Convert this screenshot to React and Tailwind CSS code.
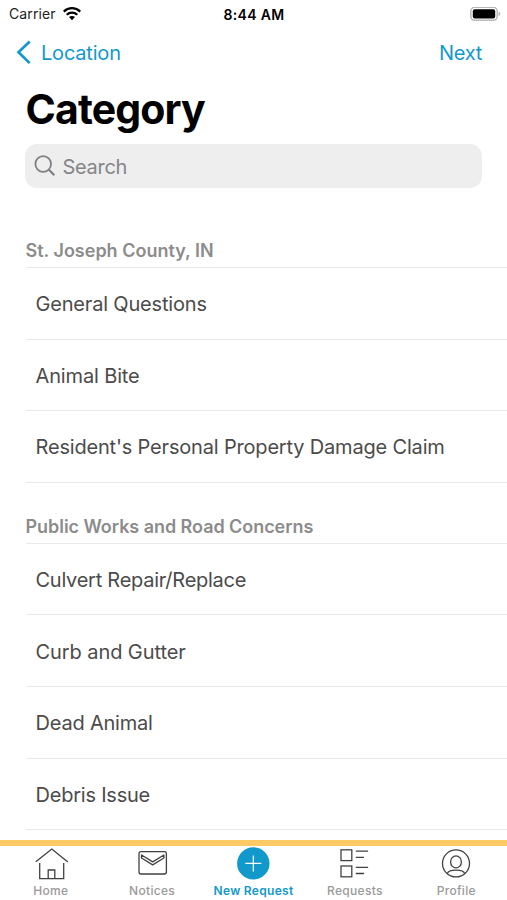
import React from "react";

const sections = [
  {
    title: "St. Joseph County, IN",
    titleClass: "tracking-[0px]",
    headClass: "h-[80px] pb-[4px]",
    rows: [
      ["General Questions", "tracking-[-0.18px]"],
      ["Animal Bite", "tracking-[-0.14px]"],
      ["Resident's Personal Property Damage Claim", "tracking-[-0.18px]"],
    ],
  },
  {
    title: "Public Works and Road Concerns",
    titleClass: "tracking-[-0.05px]",
    headClass: "h-[61px] pb-[4px]",
    rows: [
      ["Culvert Repair/Replace", "tracking-[-0.26px]"],
      ["Curb and Gutter", "tracking-[-0.08px]"],
      ["Dead Animal", "tracking-[-0.2px]"],
      ["Debris Issue", "tracking-[-0.22px]"],
    ],
  },
];

const line = { fill: "none", stroke: "#424242", strokeWidth: 1.3 };

function WifiIcon() {
  return (
    <svg className="ml-[7px] h-[14px] w-[18px]" viewBox="0 0 18 14" fill="none" stroke="#000" strokeWidth="2.2">
      <path d="M.8 4.6C5.4 0 12.6 0 17.2 4.6" />
      <path d="M3.7 7.8c3-2.8 7.6-2.8 10.6 0" />
      <path d="M6 10.1c1.7-1.5 4.3-1.5 6 0L9 13.2z" fill="#000" stroke="none" />
    </svg>
  );
}

function BatteryIcon() {
  return (
    <svg className="h-[15px] w-[31px]" viewBox="0 0 31 15">
      <rect x=".8" y=".3" width="26.4" height="13" rx="4" fill="#fff" stroke="#b8b8b8" strokeWidth="1.5" />
      <rect x="2.8" y="2.2" width="22.4" height="9.2" rx="2" fill="#000" />
      <path d="M28.6 4.7c2.3.6 2.3 3.6 0 4.3z" fill="#b4b4b4" />
    </svg>
  );
}

function HomeIcon() {
  return (
    <svg className="h-[34px] w-[34px]" viewBox="0 0 34 34" {...line}>
      <path d="M1.8 15.8 17.8 3l16 13M5.7 17v15.6h24V17M14.2 32.6V24h6.6v8.6" />
    </svg>
  );
}

function MailIcon() {
  return (
    <svg className="h-[34px] w-[34px]" viewBox="0 0 34 34" {...line}>
      <rect x="4" y="5.7" width="27.4" height="22.3" rx="2" />
      <path d="M6.5 9 17.7 15.9 28.9 9v3L17.7 18.9 6.5 12z" strokeLinejoin="round" />
    </svg>
  );
}

function PlusIcon() {
  return (
    <svg className="h-[34px] w-[34px]" viewBox="0 0 34 34">
      <circle cx="17.3" cy="17.4" r="16.2" fill="#1299cc" />
      <path d="M17.3 9.4v16M9.3 17.4h16" stroke="#fff" strokeWidth="1.2" />
    </svg>
  );
}

function ListIcon() {
  return (
    <svg className="h-[34px] w-[34px]" viewBox="0 0 34 34" {...line}>
      <rect x="3" y="3.8" width="10.8" height="10.8" />
      <rect x="3" y="20" width="10.8" height="10.8" />
      <path d="M17.8 5.2h12.3M17.8 11.4h8.2M17.8 21.4h12.3M17.8 27.5h8.2" />
    </svg>
  );
}

function ProfileIcon() {
  return (
    <svg className="h-[34px] w-[34px]" viewBox="0 0 34 34" {...line}>
      <circle cx="17" cy="17.4" r="13.5" />
      <ellipse cx="17" cy="15.9" rx="5.4" ry="6" />
      <path d="M8.4 27.7c.8-4.8 16.4-4.8 17.2 0" />
    </svg>
  );
}

const tabs = [
  ["Home", HomeIcon, "text-[#9a9a9a] font-medium"],
  ["Notices", MailIcon, "text-[#9a9a9a] font-medium"],
  ["New Request", PlusIcon, "text-[#1299cc] font-semibold"],
  ["Requests", ListIcon, "text-[#9a9a9a] font-medium"],
  ["Profile", ProfileIcon, "text-[#9a9a9a] font-medium"],
];

export default function App() {
  return (
    <div className="flex h-[900px] w-[507px] flex-col overflow-hidden bg-white font-['Inter',sans-serif]">
      <header className="grid h-[28px] shrink-0 grid-cols-3 items-center pl-[9px] pr-[6px] text-[14px] leading-none text-black">
        <div className="flex items-center">
          <span className="tracking-[0.1px] text-[#222]">Carrier</span>
          <WifiIcon />
        </div>
        <span className="pr-[2px] pt-px text-center text-[14px] font-semibold tracking-[0.35px]">8:44 AM</span>
        <div className="flex justify-end"><BatteryIcon /></div>
      </header>
      <nav className="flex h-[49px] shrink-0 items-center justify-between pl-[16px] pr-[25px] text-[20px] text-[#1299cc]">
        <div className="flex items-center">
          <svg className="mr-[10px] h-[25px] w-[15px]" viewBox="0 0 15 25" fill="none" stroke="#1299cc" strokeWidth="2.7">
            <path d="M13.7 1.5 2.5 12.3l11.2 10.8" />
          </svg>
          <span className="tracking-[-0.2px]">Location</span>
        </div>
        <span className="tracking-[-0.3px]">Next</span>
      </nav>
      <h1 className="flex h-[67px] shrink-0 items-center pb-[3px] pl-[25.5px] text-[41px] font-bold leading-none tracking-[-0.85px] text-black">Category</h1>
      <div className="ml-[25px] mr-[25px] flex h-[44px] shrink-0 items-center rounded-[12px] bg-[#eeeeee] pl-[9px] text-[20px] text-[#858589]">
        <svg className="mr-[6.5px] h-[22px] w-[22px]" viewBox="0 0 22 22" fill="none" stroke="#808084" strokeWidth="1.8">
          <circle cx="9.2" cy="9" r="7.8" />
          <path d="m14.7 14.5 5.6 5.7" strokeWidth="2.2" />
        </svg>
        <span className="pt-px tracking-[-0.3px]">Search</span>
      </div>
      <main className="min-h-0 flex-1 overflow-hidden pl-[25.5px]">
        {sections.map((s) => (
          <section key={s.title}>
            <h2 className={`flex items-end border-b border-[#e9e9e9] text-[18px] font-semibold leading-[24px] text-[#8c8c8c] ${s.headClass} ${s.titleClass}`}>{s.title}</h2>
            {s.rows.map(([name, cls]) => (
              <div key={name} className={`flex h-[71.6px] items-center border-b border-[#e9e9e9] pl-[10px] pt-[2px] text-[20px] text-[#4b4b4b] ${cls}`}>{name}</div>
            ))}
          </section>
        ))}
      </main>
      <footer className="grid h-[60px] shrink-0 grid-cols-5 border-t-[6px] border-[#fdca66] bg-white">
        {tabs.map(([name, Icon, cls]) => (
          <div key={name} className={`flex flex-col items-center text-[12px] leading-[15px] tracking-[0.3px] ${cls}`}>
            <Icon />
            <span className="mt-[3px] whitespace-nowrap">{name}</span>
          </div>
        ))}
      </footer>
    </div>
  );
}
